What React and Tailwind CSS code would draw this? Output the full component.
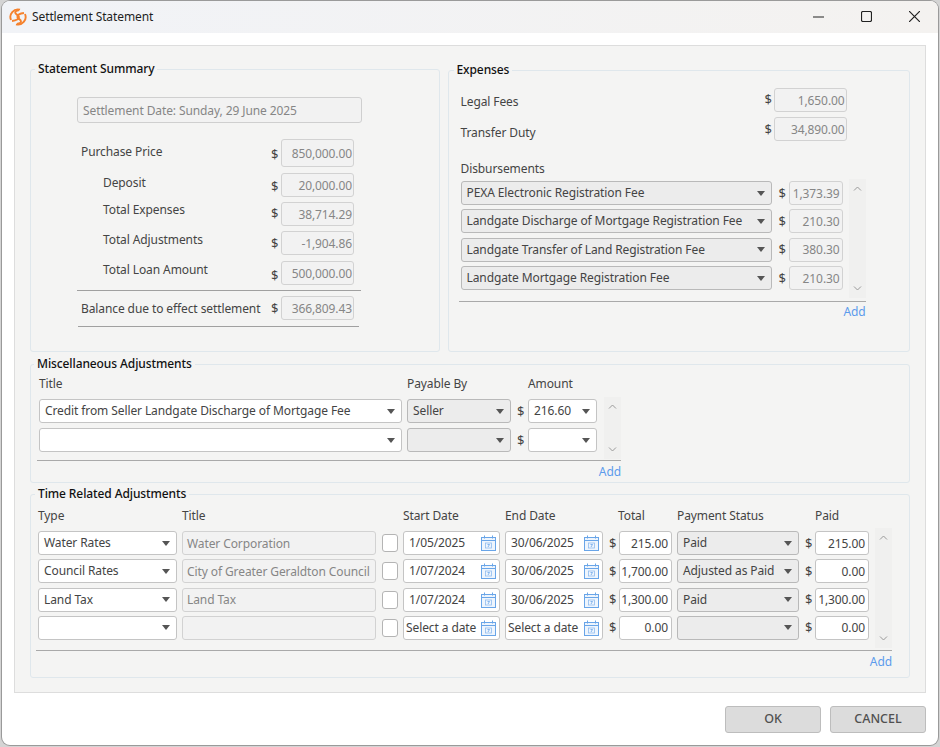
function GroupBox({ title, className, titleClass, children }) {
  return (
    <div className={`relative border border-[#dfe7ec] rounded-[3px] ${className}`}>
      <div className={`absolute -top-[9px] bg-[#f4f4f3] px-[3px] text-[12px] leading-[16px] font-medium text-[#111] whitespace-nowrap ${titleClass}`}>{title}</div>
      {children}
    </div>
  )
}

function Caret() {
  return (
    <svg width="8" height="5" viewBox="0 0 8 5" className="shrink-0">
      <path d="M0 0H8L4 5Z" fill="#555" />
    </svg>
  )
}

function Select({ value = '', className = '', gray }) {
  return (
    <div className={`flex items-center justify-between h-[24px] rounded-[3px] border pl-[5px] pr-[6px] text-[12px] text-[#444] whitespace-nowrap overflow-hidden ${gray ? 'bg-[#ececec] border-[#b9b9b9]' : 'bg-white border-[#c4c4c4]'} ${className}`}>
      <span>{value}</span>
      <Caret />
    </div>
  )
}

function Amount({ value = '', className = '', enabled }) {
  return (
    <div className={`flex items-center justify-end h-[24px] rounded-[3px] border pt-[1px] text-[12px] whitespace-nowrap ${enabled ? 'bg-white border-[#c4c4c4] text-[#444] pr-[3px]' : 'bg-[#f2f2f2] border-[#d2d2d2] text-[#868686] pr-[1px]'} ${className}`}>
      {value}
    </div>
  )
}

function Dollar({ className = '' }) {
  return <span className={`text-[13px] text-[#444] leading-none ${className}`}>$</span>
}

function CalendarIcon() {
  return (
    <svg width="15" height="16" viewBox="0 0 15 16" fill="none" className="shrink-0">
      <rect x="0.5" y="2.5" width="14" height="13" fill="#eef5fd" stroke="#69a5e8" />
      <path d="M0.5 5.5H14.5" stroke="#69a5e8" />
      <path d="M3.5 0.5V3.5M11.5 0.5V3.5" stroke="#69a5e8" />
      <rect x="4.5" y="8" width="6" height="5" stroke="#8fbcef" strokeWidth="0.8" />
      <path d="M6.5 9.5H8.5L7 12" stroke="#69a5e8" strokeWidth="0.8" />
    </svg>
  )
}

function DateBox({ value, className = '' }) {
  return (
    <div className={`flex items-center justify-between h-[24px] bg-white border border-[#c4c4c4] rounded-[3px] pl-[1px] pr-[3px] text-[12px] text-[#444] whitespace-nowrap ${className}`}>
      <span className={value === 'Select a date' ? 'pl-[1px]' : 'pl-[4px]'}>{value}</span>
      <CalendarIcon />
    </div>
  )
}

function ScrollStrip({ className = '' }) {
  return (
    <div className={`flex flex-col items-center justify-between bg-[#f0f0ef] py-[7px] ${className}`}>
      <svg width="9" height="5" viewBox="0 0 9 5" fill="none"><path d="M1 4.5L4.5 1L8 4.5" stroke="#999" /></svg>
      <svg width="9" height="5" viewBox="0 0 9 5" fill="none"><path d="M1 0.5L4.5 4L8 0.5" stroke="#999" /></svg>
    </div>
  )
}

function AddLink({ className = '' }) {
  return <div className={`text-right text-[12px] leading-[16px] text-[#5c9bec] ${className}`}>Add</div>
}

const summaryRows = [
  { label: 'Purchase Price', value: '850,000.00', row: 'mt-[16px] h-[28px] pl-[4px]', labelClass: 'w-[190px] mb-[2px]', dollar: 'mt-[2px]' },
  { label: 'Deposit', value: '20,000.00', row: 'mt-[6px] h-[24px] pl-[26px]', labelClass: 'w-[168px] mb-[4px]', dollar: 'mt-[2px]' },
  { label: 'Total Expenses', value: '38,714.29', row: 'mt-[5px] h-[24px] pl-[26px]', labelClass: 'w-[168px] mb-[8px]', dollar: 'mb-[2px]' },
  { label: 'Total Adjustments', value: '-1,904.86', row: 'mt-[5px] h-[24px] pl-[26px]', labelClass: 'w-[168px] mb-[7px]', dollar: '' },
  { label: 'Total Loan Amount', value: '500,000.00', row: 'mt-[6px] h-[24px] pl-[26px]', labelClass: 'w-[168px] mb-[7px]', dollar: 'mt-[4px]' },
]

const disbursements = [
  ['PEXA Electronic Registration Fee', '1,373.39'],
  ['Landgate Discharge of Mortgage Registration Fee', '210.30'],
  ['Landgate Transfer of Land Registration Fee', '380.30'],
  ['Landgate Mortgage Registration Fee', '210.30'],
]

const timeRows = [
  { type: 'Water Rates', title: 'Water Corporation', start: '1/05/2025', end: '30/06/2025', total: '215.00', status: 'Paid', paid: '215.00' },
  { type: 'Council Rates', title: 'City of Greater Geraldton Council', start: '1/07/2024', end: '30/06/2025', total: '1,700.00', status: 'Adjusted as Paid', paid: '0.00' },
  { type: 'Land Tax', title: 'Land Tax', start: '1/07/2024', end: '30/06/2025', total: '1,300.00', status: 'Paid', paid: '1,300.00' },
  { type: '', title: '', start: 'Select a date', end: 'Select a date', total: '0.00', status: '', paid: '0.00' },
]

function StatementSummary() {
  return (
    <GroupBox title="Statement Summary" className="w-[410px] h-[283px]" titleClass="left-[4px]">
      <div className="pl-[46px] pt-[27px] text-[12px] text-[#444]">
        <div className="flex items-center w-[285px] h-[26px] bg-[#f2f2f2] border border-[#cfcfcf] rounded-[3px] pl-[5px] pt-[1px] text-[#868686]">
          Settlement Date: Sunday, 29 June 2025
        </div>
        {summaryRows.map((r) => (
          <div key={r.label} className={`flex items-center ${r.row}`}>
            <span className={r.labelClass}>{r.label}</span>
            <Dollar className={`w-[10px] ${r.dollar}`} />
            <Amount value={r.value} className="w-[73px] h-full" />
          </div>
        ))}
        <div className="mt-[5px] w-[284px] h-[1px] bg-[#a0a0a0]" />
        <div className="flex items-center mt-[5px] h-[24px] pl-[4px]">
          <span className="w-[190px] whitespace-nowrap mt-[2px]">Balance due to effect settlement</span>
          <Dollar className="w-[10px] mt-[1px]" />
          <Amount value="366,809.43" className="w-[73px]" />
        </div>
        <div className="mt-[6px] ml-[1px] w-[281px] h-[1px] bg-[#a0a0a0]" />
      </div>
    </GroupBox>
  )
}

function Expenses() {
  return (
    <GroupBox title="Expenses" className="w-[463px] h-[282px] mt-[1px]" titleClass="left-[5px]">
      <div className="pl-[12px] pt-[17px] text-[12px] text-[#444]">
        <div className="flex items-center h-[24px]">
          <span className="w-[304px] mt-[3px]">Legal Fees</span>
          <Dollar className="w-[9px] mb-[1px]" />
          <Amount value="1,650.00" className="w-[73px]" />
        </div>
        <div className="flex items-center h-[24px] mt-[5px]">
          <span className="w-[304px] mt-[7px]">Transfer Duty</span>
          <Dollar className="w-[9px] mt-[1px]" />
          <Amount value="34,890.00" className="w-[73px]" />
        </div>
        <div className="mt-[20px] leading-[16px]">Disbursements</div>
        <div className="flex mt-[2px] w-[405px]">
          <div className="flex flex-col gap-[4.4px] pt-[2px] w-[388px]">
            {disbursements.map(([name, amt]) => (
              <div key={name} className="flex items-center">
                <Select value={name} gray className="w-[311px]" />
                <Dollar className="ml-[7px] w-[10px]" />
                <Amount value={amt} className="w-[54px] !pr-[2px]" />
              </div>
            ))}
          </div>
          <ScrollStrip className="w-[17px] h-[119px]" />
        </div>
        <div className="mt-[3px] -ml-[2px] w-[407px] h-[1px] bg-[#a9a9a9]" />
        <AddLink className="mt-[2px] w-[405px]" />
      </div>
    </GroupBox>
  )
}

function MiscAdjustments() {
  return (
    <GroupBox title="Miscellaneous Adjustments" className="h-[119px]" titleClass="left-[3px]">
      <div className="pl-[8px] pt-[11px] text-[12px] text-[#444]">
        <div className="flex leading-[16px]">
          <span className="w-[368px]">Title</span>
          <span className="w-[121px]">Payable By</span>
          <span>Amount</span>
        </div>
        <div className="flex mt-[5px] w-[582px]">
          <div className="flex flex-col gap-[5px] pt-[2px] w-[565px]">
            {[['Credit from Seller Landgate Discharge of Mortgage Fee', 'Seller', '216.60'], ['', '', '']].map(([t, p, a], i) => (
              <div key={i} className="flex items-center">
                <Select value={t} className="w-[363px]" />
                <Select value={p} gray className="w-[104px] ml-[5px]" />
                <Dollar className="ml-[6px] w-[11px]" />
                <Select value={a} className="w-[69px]" />
              </div>
            ))}
          </div>
          <ScrollStrip className="w-[17px] h-[62px]" />
        </div>
        <div className="mt-[1px] -ml-[2px] w-[584px] h-[1px] bg-[#a9a9a9]" />
        <AddLink className="mt-[3px] w-[582px]" />
      </div>
    </GroupBox>
  )
}

function TimeAdjustments() {
  return (
    <GroupBox title="Time Related Adjustments" className="h-[184px]" titleClass="left-[4px]">
      <div className="pl-[7px] pt-[13px] text-[12px] text-[#444]">
        <div className="flex leading-[16px]">
          <span className="w-[144px]">Type</span>
          <span className="w-[221px]">Title</span>
          <span className="w-[102px]">Start Date</span>
          <span className="w-[113px]">End Date</span>
          <span className="w-[59px]">Total</span>
          <span className="w-[138px]">Payment Status</span>
          <span>Paid</span>
        </div>
        <div className="flex mt-[4px] w-[854px]">
          <div className="flex flex-col gap-[4.33px] pt-[3px] w-[837px]">
            {timeRows.map((r, i) => (
              <div key={i} className="flex items-center">
                <Select value={r.type} className="w-[139px]" />
                <div className="flex items-center w-[194px] h-[24px] ml-[5px] bg-[#f2f2f2] border border-[#d2d2d2] rounded-[3px] pl-[4px] pt-[1px] text-[#868686] whitespace-nowrap overflow-hidden">{r.title}</div>
                <div className="w-[16px] h-[18px] ml-[6px] bg-white border border-[#b4b4b4] rounded-[3px]" />
                <DateBox value={r.start} className="w-[97px] ml-[5px]" />
                <DateBox value={r.end} className="w-[98px] ml-[5px]" />
                <Dollar className="ml-[6px] w-[10px]" />
                <Amount value={r.total} enabled className="w-[53px]" />
                <Select value={r.status} gray className="w-[122px] ml-[5px]" />
                <Dollar className="ml-[6px] w-[10px]" />
                <Amount value={r.paid} enabled className="w-[54px]" />
              </div>
            ))}
          </div>
          <ScrollStrip className="w-[17px] h-[120px]" />
        </div>
        <div className="mt-[2px] -ml-[2px] w-[856px] h-[1px] bg-[#a9a9a9]" />
        <AddLink className="mt-[3px] w-[854px]" />
      </div>
    </GroupBox>
  )
}

export default function App() {
  return (
    <div className="w-[940px] h-[747px] bg-[#d4d4d4] pl-[2px] pr-[2px] pt-[1px] pb-[2px] overflow-hidden tracking-[-0.1px]" style={{ fontFamily: '"Noto Sans", sans-serif' }}>
      <div className="h-full bg-white rounded-[8px] overflow-hidden flex flex-col shadow-[0_0_0_1px_#9a9a9a]">
        <div className="flex items-center h-[32px] shrink-0 bg-gradient-to-r from-[#f1f3f7] to-[#f4f2f0]">
          <svg width="18" height="18" viewBox="0 0 18 18" fill="none" className="ml-[7px]">
            <path d="M2 12A7.6 7.6 0 0 1 11 1.7" stroke="#f5822e" strokeWidth="1.9" />
            <path d="M16 6A7.6 7.6 0 0 1 7 16.3" stroke="#f5822e" strokeWidth="1.9" />
            <path d="M3 13C7 12.5 10.5 11 9.8 8.6C9.2 6.6 6.2 6.6 6.2 4.6C6.2 3.2 8 2.2 10 2.4" stroke="#f5822e" strokeWidth="1.9" />
            <path d="M15 5C11 5.5 8 6.6 8.4 9C8.8 11.2 12 11.2 12 13.4C12 14.8 10 15.8 8 15.6" stroke="#f5822e" strokeWidth="1.9" />
          </svg>
          <span className="ml-[5px] text-[12px] text-[#1f1f1f]">Settlement Statement</span>
          <div className="ml-auto flex items-center mb-[2px]">
            <svg width="11" height="11" viewBox="0 0 11 11" className="mr-[37px]"><path d="M0 6H11" stroke="#222" strokeWidth="1.2" /></svg>
            <svg width="11" height="11" viewBox="0 0 11 11" fill="none" className="mr-[37px]"><rect x="0.5" y="0.5" width="10" height="10" rx="1.5" stroke="#222" strokeWidth="1.2" /></svg>
            <svg width="11" height="11" viewBox="0 0 11 11" className="mr-[18px]"><path d="M0 0L11 11M11 0L0 11" stroke="#222" strokeWidth="1.2" /></svg>
          </div>
        </div>
        <div className="mt-[12px] ml-[12px] w-[912px] h-[648px] shrink-0 bg-[#f4f4f3] border border-[#dddddd] pt-[23px] px-[15px]">
          <div className="flex gap-[8px] h-[283px]">
            <StatementSummary />
            <Expenses />
          </div>
          <div className="mt-[12px]">
            <MiscAdjustments />
          </div>
          <div className="mt-[11px]">
            <TimeAdjustments />
          </div>
        </div>
        <div className="flex justify-end gap-[9px] mt-[13px] pr-[12px]">
          <button className="w-[96px] h-[27px] bg-[#dcdcdc] border border-[#bdbdbd] rounded-[3px] text-[12.5px] tracking-normal font-medium text-[#505050]">OK</button>
          <button className="w-[96px] h-[27px] bg-[#dcdcdc] border border-[#bdbdbd] rounded-[3px] text-[12.5px] tracking-normal font-medium text-[#505050]">CANCEL</button>
        </div>
      </div>
    </div>
  )
}
